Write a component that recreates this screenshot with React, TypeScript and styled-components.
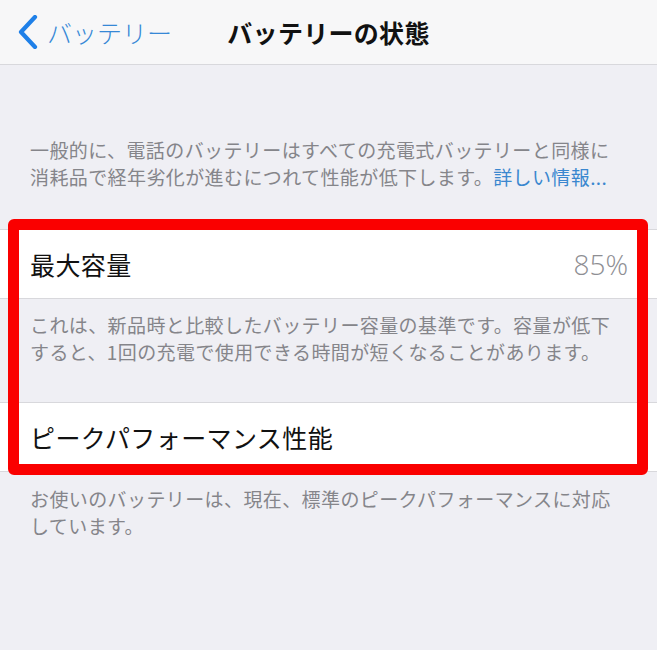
import styled, { createGlobalStyle } from "styled-components";

const GlobalStyle = createGlobalStyle`
  html, body {
    margin: 0;
    padding: 0;
    background: #efeff4;
  }
  body {
    font-family: "Noto Sans CJK JP", "Noto Sans", sans-serif;
    -webkit-font-smoothing: antialiased;
  }
`;

const Page = styled.div`
  position: relative;
  width: 657px;
  min-height: 650px;
  background: #efeff4;
`;

const NavBar = styled.header`
  height: 65px;
  display: grid;
  grid-template-columns: 1fr auto 1fr;
  align-items: center;
  background: #f7f7f8;
  border-bottom: 1px solid #d8d8dc;
  box-sizing: border-box;
`;

const BackButton = styled.div`
  display: flex;
  align-items: center;
  gap: 8px;
  padding-left: 17px;
  color: #3688d6;
  font-size: 25px;
  font-weight: 300;
`;

const Title = styled.h1`
  margin: 0;
  font-size: 25px;
  font-weight: 700;
  color: #111;
  letter-spacing: 0.3px;
`;

const Content = styled.div`
  padding-top: 71px;
`;

const Note = styled.p<{ top?: number; bottom?: number }>`
  margin: 0;
  padding: ${({ top = 0 }) => top}px 20px ${({ bottom = 0 }) => bottom}px 30px;
  font-size: 19px;
  line-height: 27px;
  letter-spacing: 0.4px;
  color: #85858a;
  white-space: nowrap;
`;

const Link = styled.span`
  color: #3a87cf;
`;

const Cell = styled.div`
  height: 68px;
  display: flex;
  align-items: center;
  justify-content: space-between;
  padding: 0 29px 0 30px;
  background: #fff;
  border-top: 1px solid #d8d8dc;
  border-bottom: 1px solid #d8d8dc;
  font-size: 25px;
  letter-spacing: 0.4px;
  color: #111;
`;

const Value = styled.span`
  color: #8e8e93;
  font-size: 28px;
  font-weight: 300;
  letter-spacing: 0;
  font-family: "Open Sans", "Noto Sans", sans-serif;
`;

const Highlight = styled.div`
  position: absolute;
  left: 8px;
  top: 219px;
  width: 640px;
  height: 256px;
  box-sizing: border-box;
  border: 11px solid #fa0000;
  border-radius: 6px;
  pointer-events: none;
`;

const Chevron = () => (
  <svg width="22" height="34" viewBox="0 0 22 34">
    <path
      d="M18 2 L4 17 L18 32"
      fill="none"
      stroke="#1f80e8"
      strokeWidth="4.2"
      strokeLinecap="round"
      strokeLinejoin="round"
    />
  </svg>
);

export default function App() {
  return (
    <Page>
      <GlobalStyle />
      <NavBar>
        <BackButton>
          <Chevron />
          <span>バッテリー</span>
        </BackButton>
        <Title>バッテリーの状態</Title>
        <div />
      </NavBar>
      <Content>
        <Note bottom={39}>
          一般的に、電話のバッテリーはすべての充電式バッテリーと同様に
          <br />
          消耗品で経年劣化が進むにつれて性能が低下します。<Link>詳しい情報...</Link>
        </Note>
        <Cell>
          <span>最大容量</span>
          <Value>85%</Value>
        </Cell>
        <Note top={12} bottom={37}>
          これは、新品時と比較したバッテリー容量の基準です。容量が低下
          <br />
          すると、1回の充電で使用できる時間が短くなることがあります。
        </Note>
        <Cell>
          <span>ピークパフォーマンス性能</span>
        </Cell>
        <Note top={13}>
          お使いのバッテリーは、現在、標準のピークパフォーマンスに対応
          <br />
          しています。
        </Note>
      </Content>
      <Highlight />
    </Page>
  );
}
